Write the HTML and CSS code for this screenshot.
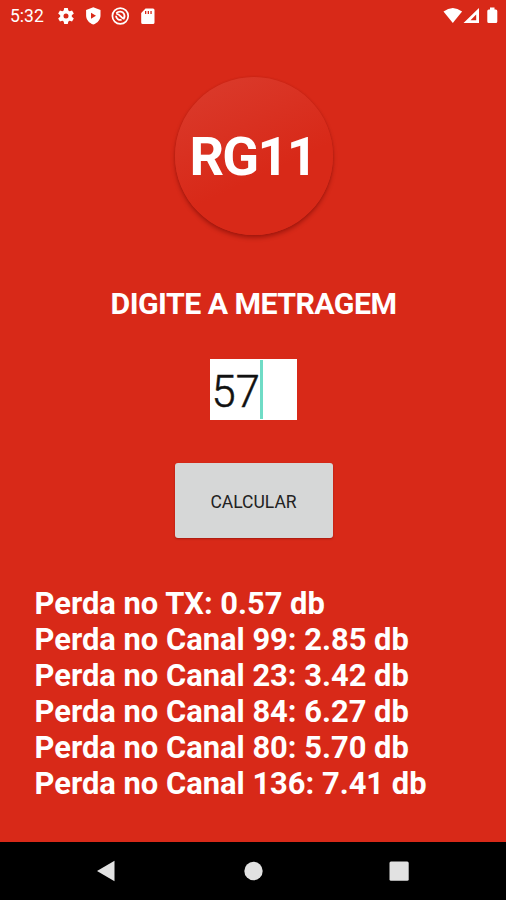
FILE: index.html
```html
<!DOCTYPE html>
<html lang="pt-br">
<head>
    <meta charset="UTF-8">
    <meta name="viewport" content="width=device-width, initial-scale=1.0">
    <link rel="stylesheet" href="styles.css">
    <title>RG11</title>
</head>
<body>
  <header class="statusbar">
    <span class="clock">5:32</span>
    <svg class="icons-left" width="102" height="20" viewBox="0 0 102 20">
      <g fill="#fff">
        <!-- settings -->
        <g transform="translate(10 10)">
          <circle r="4.2" fill="none" stroke="#fff" stroke-width="3.4"/>
          <path d="M-1.8-8h3.6l.6 3h-4.8zM-1.8 8h3.6l.6-3h-4.8z"/>
          <path d="M-1.8-8h3.6l.6 3h-4.8zM-1.8 8h3.6l.6-3h-4.8z" transform="rotate(60)"/>
          <path d="M-1.8-8h3.6l.6 3h-4.8zM-1.8 8h3.6l.6-3h-4.8z" transform="rotate(120)"/>
        </g>
        <!-- shield -->
        <path fill-rule="evenodd" d="M37.3 1.3l7.2 2.8v5.4c0 4.2-3 7.6-7.2 9-4.2-1.4-7.2-4.8-7.2-9V4.1zM35 6.8v6l5-3z"/>
        <!-- sdcard -->
        <path fill-rule="evenodd" d="M89.5 2.5H97q1.5 0 1.5 1.5v12.5q0 1.5-1.5 1.5H86.7q-1.5 0-1.5-1.5V7zM89 5v3h1.3V5zM91.7 5v3H93V5zM94.4 5v3h1.3V5z"/>
      </g>
      <g fill="none" stroke="#fff">
        <circle cx="64.3" cy="10" r="7.9" stroke-width="1.7"/>
        <path stroke-width="1.8" d="M60.3 7.2c2.5-2.5 6.4-1.8 7.7.7 1 2.2.4 4-.4 5M60 9.8c.2 3.2 3 4.6 5.6 4M60.200 8c3.500-1 4.500 4.500 8 4.800"/>
      </g>
    </svg>
    <svg class="icons-right" width="57" height="20" viewBox="0 0 57 20">
      <path fill="#fff" d="M.5 5.5q9.3-7 18.600 0L9.800 17z"/>
      <path fill="#fff" fill-rule="evenodd" d="M36 2v15H20.500zM33.200 8.400l-5.700 5.900h5.700z"/>
      <path fill="#fff" d="M47 1.500h4.500v2h1.300q1.500 0 1.500 1.500v10.500q0 1.500-1.500 1.500h-7q-1.500 0-1.500-1.500V5q0-1.500 1.500-1.500H47z"/>
    </svg>
  </header>

  <main class="container">
    <div class="logo">RG11</div>
    <label class="title" for="metragem">DIGITE A METRAGEM</label>
    <div class="field" id="metragem"><span>57</span><i class="cursor"></i></div>
    <button class="calcular">CALCULAR</button>
    <div class="resultado">
      <div>Perda no TX: 0.57 db</div>
      <div>Perda no Canal 99: 2.85 db</div>
      <div>Perda no Canal 23: 3.42 db</div>
      <div>Perda no Canal 84: 6.27 db</div>
      <div>Perda no Canal 80: 5.70 db</div>
      <div>Perda no Canal 136: 7.41 db</div>
    </div>
  </main>

  <nav class="navbar">
    <svg width="22" height="22" viewBox="0 0 22 22"><path d="M2 11L19.500.8v20.400z" fill="#e2e2e2"/></svg>
    <svg width="22" height="22" viewBox="0 0 22 22"><circle cx="11.500" cy="11" r="9.200" fill="#e2e2e2"/></svg>
    <svg width="22" height="22" viewBox="0 0 22 22"><rect x="1.500" y="1.500" width="19.200" height="19.200" rx="1.500" fill="#e2e2e2"/></svg>
  </nav>
</body>
</html>
```

FILE: styles.css
```css
html, body {
    margin: 0;
    height: 900px;
    overflow: hidden;
}
body {
    display: flex;
    flex-direction: column;
    background-color: #d82918;
    color: #fff;
    font-family: Roboto, Arial, sans-serif;
}
.statusbar {
    display: flex;
    align-items: center;
    box-sizing: border-box;
    height: 32px;
    padding: 0 6px 0 10px;
}
.clock {
    width: 46px;
    font-size: 17.5px;
    line-height: 32px;
}
.icons-right {
    margin-left: auto;
}
.container {
    display: flex;
    flex-direction: column;
    align-items: center;
    flex: 1;
    padding-top: 45px;
}
.logo {
    box-sizing: border-box;
    width: 158px;
    height: 158px;
    margin-left: 2px;
    padding-top: 1px;
    border-radius: 50%;
    background: linear-gradient(155deg, #da392a 10%, #d82918 60%);
    box-shadow: 0 3px 4px rgba(90, 0, 0, 0.4), 0 0 2px rgba(90, 0, 0, 0.2);
    font-size: 54px;
    font-weight: bold;
    line-height: 158px;
    text-align: center;
    letter-spacing: -1.7px;
    text-indent: -2.5px;
}
.title {
    margin: 51px 0 0 1px;
    font-size: 30.3px;
    font-weight: bold;
    line-height: 36px;
    letter-spacing: -0.55px;
}
.field {
    display: flex;
    box-sizing: border-box;
    width: 87px;
    height: 61px;
    margin-top: 37px;
    padding: 1px 2px;
    background-color: #fff;
    color: #111;
    font-size: 43.5px;
    line-height: 66px;
}
.field span {
    width: 48px;
    font-weight: 300;
    -webkit-text-stroke: 0.5px #111;
}
.cursor {
    width: 3px;
    background-color: #6fdcc6;
}
.calcular {
    width: 158px;
    height: 75px;
    margin: 43px 0 0 2px;
    padding: 2px 1px 0 0;
    border: none;
    border-radius: 3px;
    background-color: #d6d7d7;
    box-shadow: 0 1px 2px rgba(90, 0, 0, 0.4);
    color: #222;
    font-family: inherit;
    font-size: 17.5px;
}
.resultado {
    align-self: stretch;
    margin-top: 48px;
    padding-left: 34.5px;
    font-size: 30.9px;
    font-weight: bold;
    line-height: 36.1px;
    white-space: nowrap;
}
.navbar {
    display: flex;
    justify-content: space-between;
    align-items: center;
    box-sizing: border-box;
    height: 58px;
    padding: 0 96px 0 95px;
    background-color: #000;
}
```
